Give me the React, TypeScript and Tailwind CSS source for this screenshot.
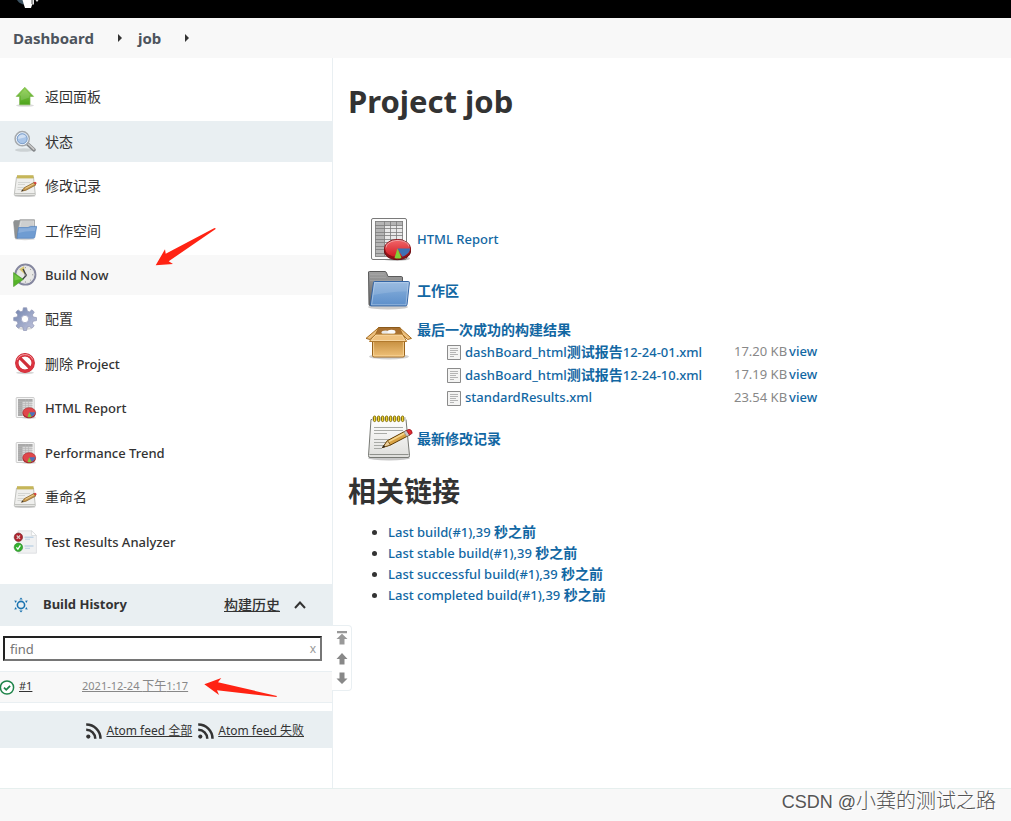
import type { ReactNode } from 'react'

type IconProps = { className?: string }

function UpArrowIcon({ className }: IconProps) {
  return (
    <svg className={className} viewBox="0 0 24 24" aria-hidden="true">
      <defs>
        <linearGradient id="up-fill" x1="0" y1="0" x2="0" y2="1">
          <stop offset="0" stopColor="#8ccf4d" />
          <stop offset="1" stopColor="#4ba31b" />
        </linearGradient>
      </defs>
      <ellipse cx="12" cy="20.400" rx="9" ry="1.400" fill="#000" opacity=".14" />
      <path d="M11.800 2.300 20.600 11.400H17V19.800H6.600V11.400H3.200Z" fill="url(#up-fill)" stroke="#78b54a" strokeWidth=".7" />
      <path d="M11.800 4 17.800 10.500H16.300V12.500L7.800 15.500V10.500H5.800Z" fill="#fff" opacity=".15" />
    </svg>
  )
}

function SearchIcon({ className }: IconProps) {
  return (
    <svg className={className} viewBox="0 0 24 24" aria-hidden="true">
      <ellipse cx="11" cy="20" rx="9" ry="1.800" fill="#000" opacity=".12" />
      <path d="m14.200 13.600 6.800 6.200" stroke="#85888b" strokeWidth="3.600" strokeLinecap="round" />
      <path d="m15.200 14 5.600 5.200" stroke="#c9c9c9" strokeWidth="1.600" strokeLinecap="round" />
      <circle cx="9.200" cy="8.700" r="7.100" fill="#b4cdea" stroke="#a6a9ac" strokeWidth="1.500" />
      <circle cx="9.200" cy="8.700" r="5.800" fill="#a9c5e8" stroke="#f7f9fb" strokeWidth="1" />
      <circle cx="9.200" cy="8.700" r="5" fill="none" stroke="#6f93c2" strokeWidth=".8" />
      <path d="M5 9a4.500 4.500 0 0 1 8-2.700C11.500 8.500 8 8 5 9Z" fill="#fff" opacity=".45" />
    </svg>
  )
}

function NotepadIcon({ className }: IconProps) {
  return (
    <svg className={className} viewBox="0 0 48 48" aria-hidden="true">
      <defs>
        <linearGradient id="pad-paper" x1="0" y1="0" x2="0" y2="1">
          <stop offset="0" stopColor="#ffffff" />
          <stop offset="1" stopColor="#dededb" />
        </linearGradient>
      </defs>
      <ellipse cx="24" cy="43" rx="21" ry="2.400" fill="#000" opacity=".22" />
      <path d="M6 4.500H41L44.500 40.500Q44.500 42.500 43 42.500H5Q3.500 42.500 3.500 40.500Z" fill="url(#pad-paper)" stroke="#777974" />
      <path d="M4.500 39.500H43.500" stroke="#8f918c" strokeWidth="1" />
      <path d="M9 12.500H38M9 15.500H38M9 18.500H22M9 24.500H34M9 27.500H30M9 30.500H21M9 33.500H17" stroke="#a8aaa6" />
      <path d="M7 2.200H41V5.600H7Z" fill="#cfcfca" />
      {[8, 12, 16, 20, 24, 28, 32, 36].map((x) => (
        <rect key={x} x={x + 0.5} y="1" width="2.200" height="5.600" rx="1.100" fill="#f3d832" stroke="#7a6500" strokeWidth=".9" />
      ))}
      <path d="M17.500 32.500 22.500 25.600 42 15.200 45 19.800 25.500 30Z" fill="#d9a243" stroke="#5e3c06" strokeWidth="1" strokeLinejoin="round" />
      <path d="m22.800 26.200 18-9.600 1 1.400-18.200 9.600Z" fill="#f6d68c" />
      <path d="M17.500 32.500 22.500 25.600 25.500 30Z" fill="#edcf9a" stroke="#5e3c06" strokeWidth=".7" />
      <path d="m17 32.900 2-2.800 1.200 1.700Z" fill="#222" />
      <path d="m38.800 16.900 3.200-1.700 3 4.600-3.300 1.700Z" fill="#c8c8c8" stroke="#777" strokeWidth=".5" />
      <path d="M41.500 15.500 44 14.300Q47.200 14.600 47.200 18.300L44.500 20Z" fill="#e32830" stroke="#921018" strokeWidth=".7" />
    </svg>
  )
}

function SmallNotepadIcon({ className }: IconProps) {
  return (
    <svg className={className} viewBox="0 0 24 24" aria-hidden="true">
      <ellipse cx="12" cy="22" rx="10.500" ry="1" fill="#000" opacity=".2" />
      <path d="M3.500 3H20.500L22.300 20.500Q22.300 21.500 21.500 21.500H2Q1.300 21.500 1.300 20.500Z" fill="#efefed" stroke="#b3b4b0" strokeWidth=".8" />
      <path d="M2 19.700H22" stroke="#b9bab6" />
      <path d="M5 8.500H17M5 10.500H12M4.500 13.500H14M4.500 15.500H11" stroke="#ccceca" strokeWidth=".8" />
      <path d="M4 1.300H20.500V4.300H4Z" fill="#b9a740" />
      <path d="M5 1.300V4.300M7 1.300V4.300M9 1.300V4.300M11 1.300V4.300M13 1.300V4.300M15 1.300V4.300M17 1.300V4.300M19 1.300V4.300" stroke="#d8cd80" strokeWidth=".8" />
      <path d="M8.500 17.200 11.500 13.600 21 8.500 22.800 11 13 16.200Z" fill="#c99a4e" stroke="#7e5a22" strokeWidth=".7" strokeLinejoin="round" />
      <path d="m12 14 8.500-4.500.5.800-8.600 4.500Z" fill="#ecd092" />
      <path d="m8.200 17.500 1.500-2 .8 1.200Z" fill="#333" />
      <path d="m20.600 8.600 1.600-.9q1.500.3 1.400 1.900l-1.300.9Z" fill="#d63c3c" />
    </svg>
  )
}

function FolderIcon({ className }: IconProps) {
  return (
    <svg className={className} viewBox="0 0 48 48" aria-hidden="true">
      <defs>
        <linearGradient id="folder-front" x1="0" y1="0" x2="0" y2="1">
          <stop offset="0" stopColor="#8cb2dd" />
          <stop offset="1" stopColor="#5c8fca" />
        </linearGradient>
        <linearGradient id="folder-back" x1="0" y1="0" x2="0" y2="1">
          <stop offset="0" stopColor="#a1a1a1" />
          <stop offset="1" stopColor="#606060" />
        </linearGradient>
      </defs>
      <ellipse cx="23" cy="40" rx="20" ry="2.500" fill="#000" opacity=".2" />
      <path d="M3.500 5Q3.500 4.500 4.500 4.500H20Q21 4.500 21.600 6L23 9.500H36.500Q37.500 9.500 37.500 11V38.500H5Q4 38.500 4 37.500Z" fill="url(#folder-back)" stroke="#5a5a5a" />
      <path d="M5 7.500H19M5 10.500H21M5 13.500H36" stroke="#aaa" strokeWidth=".6" />
      <path d="M8.500 15.500Q8.500 14.500 9.500 14.500H43.500Q44.500 14.500 44.400 15.600L42 37.600Q41.900 38.900 40.600 38.900H6Q5.200 38.900 5.300 38Z" fill="url(#folder-front)" stroke="#3465a4" />
      <path d="M9.600 15.600H43.300L41 37.800H6.600Z" fill="none" stroke="#fff" strokeOpacity=".35" />
      <path d="M9.800 16H43L42 24.500Q28 24 8.500 28Z" fill="#fff" opacity=".12" />
    </svg>
  )
}

function SmallFolderIcon({ className }: IconProps) {
  return (
    <svg className={className} viewBox="0 0 24 24" aria-hidden="true">
      <ellipse cx="12" cy="20" rx="10" ry="1.200" fill="#000" opacity=".16" />
      <path d="M.6 3 1.600 1.500H6L7 .8H21.500V10L4 19.400H3Q2.200 19.400 2.100 18.500Z" fill="#8f9293" stroke="#86898b" strokeWidth=".6" />
      <path d="M7.300 1.200H21.300V10H5.300Z" fill="#dcdddd" stroke="#a2a4a5" strokeWidth=".5" />
      <path d="M8.500 3H20M8 5H20M7.500 7H20" stroke="#b9bbbc" strokeWidth=".8" />
      <path d="M5.500 8.500H15L17.500 7.400H23.700L21.800 18.100Q21.600 19.200 20.500 19.200H4Z" fill="#6f9cd2" stroke="#5483bd" strokeWidth=".7" />
      <path d="M6 9.300H15.300L17.700 8.200H22.900L22.100 12Q14 11.500 5.200 14Z" fill="#fff" opacity=".18" />
    </svg>
  )
}

function ClockIcon({ className }: IconProps) {
  return (
    <svg className={className} viewBox="0 0 24 24" aria-hidden="true">
      <circle cx="12.400" cy="11.600" r="10" fill="#f5f5f2" stroke="#85879f" strokeWidth="2" />
      <circle cx="12.400" cy="11.600" r="8.600" fill="#e8e8e5" stroke="#d5d5db" strokeWidth=".6" />
      <path d="M12 11.600 6.200 6.200 11 3.200Z" fill="#d8c66e" />
      <path d="m10 6 3.200 6.400-3.800 4" fill="none" stroke="#3e4244" strokeWidth="1.400" />
      <circle cx="12.800" cy="12" r="1.300" fill="#777" />
      <path d="M12.400 4v1.200M12.400 18.400v1.200M19 11.800h1.200M17.200 6.800l.8-.8M17.200 16.800l.8.8" stroke="#999" strokeWidth="1" />
      <path d="M.6 9.600 10.200 16.400 .6 23.600Z" fill="#55b428" stroke="#4b9a2a" strokeWidth=".7" />
      <path d="M1.400 11.200 8 16 1.400 17.500Z" fill="#91d863" opacity=".5" />
    </svg>
  )
}

function GearIcon({ className }: IconProps) {
  return (
    <svg className={className} viewBox="0 0 24 24" aria-hidden="true">
      <defs>
        <linearGradient id="gear-fill" x1="0" y1="0" x2="1" y2="1">
          <stop offset="0" stopColor="#6f82ad" />
          <stop offset="1" stopColor="#c5c8df" />
        </linearGradient>
      </defs>
      <ellipse cx="12" cy="21.500" rx="7" ry="1.500" fill="#000" opacity=".15" />
      <path
        d="M10.300.8H13.700L14.300 4 16.300 4.900 19 2.800 21.300 5.200 19.400 7.900 20.200 10 23.500 10.600V13.600L20.200 14.200 19.300 16.300 21.200 19 18.900 21.200 16.200 19.400 14.200 20.200 13.600 23.500H10.500L9.900 20.200 7.900 19.400 5.200 21.200 3 19 4.900 16.300 4 14.200.7 13.600V10.500L4 10 4.800 7.900 2.800 5.200 5 2.900 7.800 4.800 9.800 4Z"
        fill="url(#gear-fill)"
        stroke="#9196b4"
        strokeWidth=".7"
        strokeLinejoin="round"
      />
      <circle cx="12" cy="12" r="3.700" fill="#fff" stroke="#9da3c2" strokeWidth=".8" />
    </svg>
  )
}

function ForbiddenIcon({ className }: IconProps) {
  return (
    <svg className={className} viewBox="0 0 24 24" aria-hidden="true">
      <ellipse cx="12" cy="20.800" rx="9" ry="1.400" fill="#000" opacity=".16" />
      <circle cx="12" cy="11" r="8.200" fill="#fff" stroke="#c62a33" strokeWidth="3.400" />
      <path d="m6.400 5.400 11.200 11.200" stroke="#cf2f39" strokeWidth="3.200" />
      <circle cx="12" cy="11" r="8.200" fill="none" stroke="#dc3440" strokeWidth="2.400" />
      <path d="M4 8a8.600 8.600 0 0 1 15.800-.4" fill="none" stroke="#f2a0a4" strokeWidth="1" />
    </svg>
  )
}

function ReportIcon({ className }: IconProps) {
  return (
    <svg className={className} viewBox="0 0 48 48" aria-hidden="true">
      <defs>
        <linearGradient id="pie-fill" x1="0" y1="0" x2="0" y2="1">
          <stop offset="0" stopColor="#f2686b" />
          <stop offset="1" stopColor="#d01820" />
        </linearGradient>
      </defs>
      <ellipse cx="31" cy="42.500" rx="14" ry="2.600" fill="#000" opacity=".22" />
      <rect x="6.500" y="2.500" width="35" height="41" rx="1.500" fill="#fbfbfb" stroke="#7a7a7a" />
      <rect x="10" y="5" width="28" height="35.500" fill="#e8e8e8" />
      <path d="M10 5H38V9.500H19.500V40.500H10Z" fill="#b5b5b5" />
      <path
        d="M10 5.500H38M10 9.500H38M10 12.500H38M10 16.500H38M10 19.500H38M10 23.500H38M10 26.500H38M10 30.500H38M10 33.500H38M10 37.500H38M10 40.500H38M10.500 5V40M19.500 5V40M25.500 5V40M31.500 5V40M37.500 5V40"
        stroke="#7c7c7c"
        strokeWidth=".8"
      />
      <path d="M19.500 32V35C19.500 46.500 45.500 46.500 45.500 35V32Z" fill="#8d1218" stroke="#670d11" />
      <ellipse cx="32.500" cy="32.500" rx="13" ry="9" fill="url(#pie-fill)" stroke="#8c1117" />
      <path d="M32.500 32.500H45Q45 37.500 37.500 40.800Z" fill="#3d70b5" />
      <path d="M32.500 32.500 36.500 42Q33 43 29.500 42Z" fill="#80d237" />
      <path d="M21 31.500c1-9 21.500-9.500 23-1" fill="none" stroke="#fff" strokeOpacity=".45" />
    </svg>
  )
}

function SmallReportIcon({ className }: IconProps) {
  return (
    <svg className={className} viewBox="0 0 24 24" aria-hidden="true">
      <ellipse cx="16" cy="21.800" rx="7" ry="1" fill="#000" opacity=".16" />
      <rect x="3.200" y="1.500" width="18" height="20" rx=".8" fill="#f6f6f6" stroke="#c2c2c2" strokeWidth=".8" />
      <path d="M5 3H19.500V20H5Z" fill="#d6d6d6" />
      <path d="M5 3H19.500V5.500H9.500V20H5Z" fill="#aaa" />
      <path d="M5 5.500H19.500M5 7.500H19.500M5 9.500H19.500M5 11.500H19.500M5 13.500H19.500M5 15.500H19.500M5 17.500H19.500M12.500 3V20M15.500 3V20" stroke="#b4b4b4" strokeWidth=".6" />
      <path d="M9.800 16.600V18C9.800 23.600 22.600 23.600 22.600 18V16.600Z" fill="#a1262b" />
      <ellipse cx="16.200" cy="16.500" rx="6.400" ry="4.800" fill="#e0474b" stroke="#a9282d" strokeWidth=".6" />
      <path d="M16.200 16.300H22.300Q22 19 18.800 20.700Z" fill="#4a72ba" />
      <path d="M16.200 16.300 18.600 21Q16.500 21.700 14.500 21Z" fill="#7fc53e" />
    </svg>
  )
}

function ResultsIcon({ className }: IconProps) {
  return (
    <svg className={className} viewBox="0 0 24 24" aria-hidden="true">
      <path d="M5 .8H18.600L23.400 5.500V23.200H5Z" fill="#f0f1f2" stroke="#dadcde" strokeWidth=".8" />
      <path d="M18.600.8V5.500H23.400Z" fill="#fff" stroke="#d3d5d7" strokeWidth=".7" />
      <path d="M11.500 7.200H20.500M11.500 16H20.500" stroke="#a9c6df" strokeWidth="1" />
      <path d="M12 9.200H17M12 18.300H17" stroke="#bcd2e5" strokeWidth="1" />
      <circle cx="5.400" cy="7.200" r="4.200" fill="#b0222c" stroke="#7d3339" strokeWidth=".7" />
      <path d="m3.700 5.500 3.400 3.400m0-3.400L3.700 8.900" stroke="#dcc" strokeWidth="1.200" />
      <circle cx="5.400" cy="17.300" r="4.200" fill="#33b32f" stroke="#3c8a3a" strokeWidth=".7" />
      <path d="m3.400 17.300 1.500 1.900 2.500-3.900" fill="none" stroke="#fff" strokeWidth="1.300" />
    </svg>
  )
}

function PackageIcon({ className }: IconProps) {
  return (
    <svg className={className} viewBox="0 0 48 48" aria-hidden="true">
      <defs>
        <linearGradient id="box-front" x1="0" y1="0" x2="0" y2="1">
          <stop offset="0" stopColor="#c48c3c" />
          <stop offset="1" stopColor="#f0c27a" />
        </linearGradient>
      </defs>
      <ellipse cx="24" cy="38.500" rx="20" ry="3" fill="#000" opacity=".18" />
      <path d="M13.500 9.500H35L39 19H9Z" fill="#a87030" stroke="#8a5a1c" />
      <ellipse cx="20.500" cy="14.500" rx="4" ry="2" fill="#e9e9e9" />
      <ellipse cx="26.500" cy="14" rx="4" ry="2.200" fill="#fafafa" />
      <path d="M7.500 22H39.500V37.500Q39.500 39 38 39H9Q7.500 39 7.500 37.500Z" fill="url(#box-front)" stroke="#99631c" />
      <path d="M8.600 24V37.900H38.400V24" fill="none" stroke="#ffe0a8" strokeOpacity=".7" />
      <path d="M9.500 16.200H37.500L41.700 23.500H4.500Z" fill="#efc280" stroke="#b17a2e" />
      <path d="M10.400 17.200H37L40 22.500H6.200Z" fill="none" stroke="#ffe6b8" strokeOpacity=".7" strokeWidth=".8" />
      <path d="M13.800 9.500 1 20.400 5 21.500 10.500 16.500Z" fill="#edbf7c" stroke="#a56d22" strokeLinejoin="round" />
      <path d="M34.500 9.500 46.500 20.400 42.500 21.500 37.500 16.500Z" fill="#edbf7c" stroke="#a56d22" strokeLinejoin="round" />
    </svg>
  )
}

function FileIcon({ className }: IconProps) {
  return (
    <svg className={className} viewBox="0 0 16 16" aria-hidden="true">
      <path d="M1.500 1.500H14.500V15.500H1.500Z" fill="#f4f4f3" stroke="#8b8b8b" />
      <path d="M4 4.500H12M4 6.500H12M4 8.500H10M4 10.500H12M4 12.500H8" stroke="#b4b4b4" />
    </svg>
  )
}

function FeedIcon({ className }: IconProps) {
  return (
    <svg className={className} viewBox="0 0 16 16" aria-hidden="true">
      <circle cx="2.300" cy="13.600" r="2.100" fill="#333" />
      <path d="M.2 6.700a9 9 0 0 1 9.100 9M.2 1.500a14.200 14.200 0 0 1 14.300 14.200" fill="none" stroke="#333" strokeWidth="2.500" />
    </svg>
  )
}

function TrendIcon({ className }: IconProps) {
  return (
    <svg className={className} viewBox="0 0 16 16" aria-hidden="true" fill="#1a73b0">
      <circle cx="8" cy="8" r="3.600" fill="none" stroke="#1a73b0" strokeWidth="1.600" />
      <path d="M6.300 2.600 8 .4l1.700 2.200ZM6.300 13.400 8 15.600l1.700-2.200ZM1.200 3.500l2.700.3-1.200 2.100ZM14.800 3.500l-2.700.3 1.200 2.100ZM1.200 12.500l2.700-.3-1.200-2.100ZM14.800 12.500l-2.700-.3 1.200-2.100Z" />
    </svg>
  )
}

const tasks: { label: string; Icon: (props: IconProps) => ReactNode; state?: 'active' | 'hover' }[] = [
  { label: '返回面板', Icon: UpArrowIcon },
  { label: '状态', Icon: SearchIcon, state: 'active' },
  { label: '修改记录', Icon: SmallNotepadIcon },
  { label: '工作空间', Icon: SmallFolderIcon },
  { label: 'Build Now', Icon: ClockIcon, state: 'hover' },
  { label: '配置', Icon: GearIcon },
  { label: '删除 Project', Icon: ForbiddenIcon },
  { label: 'HTML Report', Icon: SmallReportIcon },
  { label: 'Performance Trend', Icon: SmallReportIcon },
  { label: '重命名', Icon: SmallNotepadIcon },
  { label: 'Test Results Analyzer', Icon: ResultsIcon },
]

const artifacts = [
  { name: 'dashBoard_html测试报告12-24-01.xml', size: '17.20 KB' },
  { name: 'dashBoard_html测试报告12-24-10.xml', size: '17.19 KB' },
  { name: 'standardResults.xml', size: '23.54 KB' },
]

const permalinks = [
  'Last build(#1),39 秒之前',
  'Last stable build(#1),39 秒之前',
  'Last successful build(#1),39 秒之前',
  'Last completed build(#1),39 秒之前',
]

const stateMap = {
  active: 'bg-[#e9eff2]',
  hover: 'bg-[#f8f8f8]',
}

/* Han characters are set one step larger than the Latin text beside them */
function Label({ text, hanClass = 'font-bold' }: { text: string; hanClass?: string }) {
  return (
    <span>
      {text.split(/([\u4e00-\u9fff]+)/).map((part, i) =>
        i % 2 ? <span key={i} className={`text-[14px] ${hanClass}`}>{part}</span> : part
      )}
    </span>
  )
}

function Caret() {
  return (
    <svg className="h-2 w-1" viewBox="0 0 4 8" aria-hidden="true">
      <path d="M0 0 4 4 0 8Z" fill="#333" />
    </svg>
  )
}

function TopBar() {
  return (
    <header>
      <div className="h-[18px] bg-black">
        <svg className="ml-4 h-[10px] w-6" viewBox="0 0 24 10" aria-hidden="true">
          <path d="M1 0H10V4L7 4.500 3 2.500Z" fill="#3b5261" />
          <path d="M6.500 0H16V5L15 8H9L8 5Z" fill="#fff" />
          <path d="M15.500 0H18V4.500H15.500ZM19.500 0H22.500L21 2Z" fill="#e4e4e4" />
          <path d="M16 0V4" stroke="#333" strokeWidth=".8" />
        </svg>
      </div>
      <nav aria-label="breadcrumb" className="flex h-10 items-center bg-[#f8f8f8] pl-[13px] text-[15px] font-bold text-[#4d545d]">
        <a href="#dashboard">Dashboard</a>
        <span className="pr-4 pl-6"><Caret /></span>
        <a href="#job">job</a>
        <span className="pl-6"><Caret /></span>
      </nav>
    </header>
  )
}

function BuildHistory() {
  return (
    <section className="mt-5">
      <div className="flex h-[42px] items-center bg-[#e9eff2] pr-6 pl-[13px]">
        <TrendIcon className="h-4 w-4" />
        <h2 className="ml-[14px] text-[13px] font-bold">Build History</h2>
        <a href="#trend" className="ml-auto text-sm font-medium underline">构建历史</a>
        <button type="button" aria-label="collapse" className="ml-3">
          <svg className="h-4 w-4" viewBox="0 0 16 16" aria-hidden="true">
            <path d="m3 11 5-5.500 5 5.500" fill="none" stroke="#333" strokeWidth="2" />
          </svg>
        </button>
      </div>

      <div className="relative mt-[10px] mr-[10px] ml-[3px]">
        <input
          type="text"
          aria-label="find"
          placeholder="find"
          className="block h-[25px] w-full border-2 border-t-[#222] border-r-[#767676] border-b-[#767676] border-l-[#222] bg-white px-[5px] text-[13px] placeholder:text-[#757575]"
        />
        <button type="button" className="absolute inset-y-0 right-[6px] text-xs text-[#999]">x</button>
      </div>

      <div className="relative mt-[10px] flex h-8 items-center border-y border-[#e9eff2] bg-[#f8f8f8] text-[11px] leading-4">
        <svg className="-ml-px h-4 w-4" viewBox="0 0 16 16" aria-hidden="true">
          <circle cx="8" cy="8.500" r="6.600" fill="#fff" stroke="#1e8449" strokeWidth="1.500" />
          <path d="m5 8.700 2.200 2.100 3.900-4" fill="none" stroke="#1e8449" strokeWidth="1.800" />
        </svg>
        <a href="#build-1" className="ml-1 w-[63px] pb-[2px] underline">#1</a>
        <a href="#build-1" className="pb-[2px] text-[#888] underline">2021-12-24 <span className="text-[12px]">下午</span>1:17</a>
        <svg className="pointer-events-none absolute top-[5px] left-[204px] h-5 w-[74px]" viewBox="0 0 74 20" aria-hidden="true">
          <path d="M.3 7.300 17.300 1 14 5.300 73 19 72.400 20 13 13.300 15 18Z" fill="#ff2313" />
        </svg>
      </div>

      <div className="mt-2 flex h-[37px] items-center justify-end gap-[6px] bg-[#e9eff2] pt-[2px] pr-7 text-xs">
        <a href="#atom-all" className="flex items-center gap-1">
          <FeedIcon className="h-4 w-4" />
          <span className="underline">Atom feed 全部</span>
        </a>
        <a href="#atom-failed" className="flex items-center gap-1">
          <FeedIcon className="h-4 w-4" />
          <span className="underline">Atom feed 失败</span>
        </a>
      </div>
    </section>
  )
}

function Pager() {
  return (
    <div className="absolute top-[567px] left-full flex w-5 flex-col items-center gap-[7px] rounded-r border border-l-0 border-[#e9eff2] bg-white py-1 pb-[6px]">
      <button type="button" aria-label="newest">
        <svg className="block h-4 w-3" viewBox="0 0 12 16" aria-hidden="true">
          <path d="M1 1H11V3.200H1ZM6 3.800 11.500 9H8.500V14.500H3.500V9H.5Z" fill="#999" />
        </svg>
      </button>
      <button type="button" aria-label="newer">
        <svg className="block h-3 w-3" viewBox="0 0 12 12" aria-hidden="true">
          <path d="M6 0 11.500 6H8.500V11.500H3.500V6H.5Z" fill="#888" />
        </svg>
      </button>
      <button type="button" aria-label="older">
        <svg className="block h-3 w-3" viewBox="0 0 12 12" aria-hidden="true">
          <path d="M6 12 11.500 6.500H8.500V.5H3.500V6.500H.5Z" fill="#888" />
        </svg>
      </button>
    </div>
  )
}

function SidePanel() {
  return (
    <aside className="relative w-[333px] shrink-0 border-r border-[#e9eff2] pt-[17px] pb-10">
      <ul className="grid min-h-[489px] auto-rows-fr">
        {tasks.map(({ label, Icon, state }) => (
          <li key={label} className="relative flex py-[2px]">
            <a href="#task" className={`flex flex-1 items-center gap-2 pl-[13px] text-[13px] leading-5 font-medium ${state ? stateMap[state] : ''}`}>
              <Icon className="h-6 w-6" />
              <Label text={label} hanClass="font-normal" />
            </a>
            {state === 'hover' && (
              <svg className="pointer-events-none absolute top-[-26px] left-[155px] h-[39px] w-[62px]" viewBox="0 0 62 39" aria-hidden="true">
                <path d="M.7 38.300 10 22.300 10.700 26.700 59.500 1 61 1.700 13.700 34.300 18 37Z" fill="#ff2313" />
              </svg>
            )}
          </li>
        ))}
      </ul>
      <BuildHistory />
      <Pager />
    </aside>
  )
}

function MainPanel() {
  return (
    <main className="min-w-0 flex-1 pt-[23px] pl-[15px]">
      <h1 className="text-[31px] leading-10 font-bold">Project job</h1>

      <div className="mt-[95px] ml-[17px] flex flex-col gap-[3px] text-[13px] font-medium text-[#1267a3]">
        <div className="flex items-center gap-1">
          <ReportIcon className="h-12 w-12" />
          <a href="#html">HTML Report</a>
        </div>
        <div className="flex items-center gap-1">
          <FolderIcon className="h-12 w-12" />
          <a href="#ws"><Label text="工作区" /></a>
        </div>
        <div className="flex gap-1">
          <PackageIcon className="h-12 w-12" />
          <div className="pt-[2px] pb-[3px]">
            <a href="#artifacts" className="block leading-5"><Label text="最后一次成功的构建结果" /></a>
            <table className="ml-[29px]">
              <tbody>
                {artifacts.map((file) => (
                  <tr key={file.name} className="h-[23px]">
                    <td className="w-[19px]"><FileIcon className="h-4 w-4" /></td>
                    <td className="w-[269px]"><a href="#file"><Label text={file.name} /></a></td>
                    <td className="pr-[2px] text-right font-normal text-[#888]">{file.size}</td>
                    <td><a href="#view">view</a></td>
                  </tr>
                ))}
              </tbody>
            </table>
          </div>
        </div>
        <div className="flex items-center gap-1">
          <NotepadIcon className="h-12 w-12" />
          <a href="#changes"><Label text="最新修改记录" /></a>
        </div>
      </div>

      <h2 className="mt-2 text-[28px] leading-10 font-bold">相关链接</h2>
      <ul className="mt-[10px] list-disc pl-10 text-[13px] leading-[21px] font-medium">
        {permalinks.map((link) => (
          <li key={link} className="h-[21px]">
            <a href="#permalink" className="text-[#1267a3]"><Label text={link} /></a>
          </li>
        ))}
      </ul>
    </main>
  )
}

export default function App() {
  return (
    <div className="flex min-h-screen flex-col bg-white font-['Noto_Sans','Noto_Sans_CJK_SC',sans-serif] text-[#333]">
      <TopBar />
      <div className="flex flex-1">
        <SidePanel />
        <MainPanel />
      </div>
      <footer className="flex h-[33px] items-start justify-end border-t border-[#e6efee] bg-[#f8f8f8] pr-[15px]">
        <span className="font-['Liberation_Sans','Noto_Sans_CJK_SC',sans-serif] text-lg leading-6 font-light text-[#555] [text-shadow:1px_1px_0_#fff]">
          CSDN @<span className="text-xl leading-6">小龚的测试之路</span>
        </span>
      </footer>
    </div>
  )
}
